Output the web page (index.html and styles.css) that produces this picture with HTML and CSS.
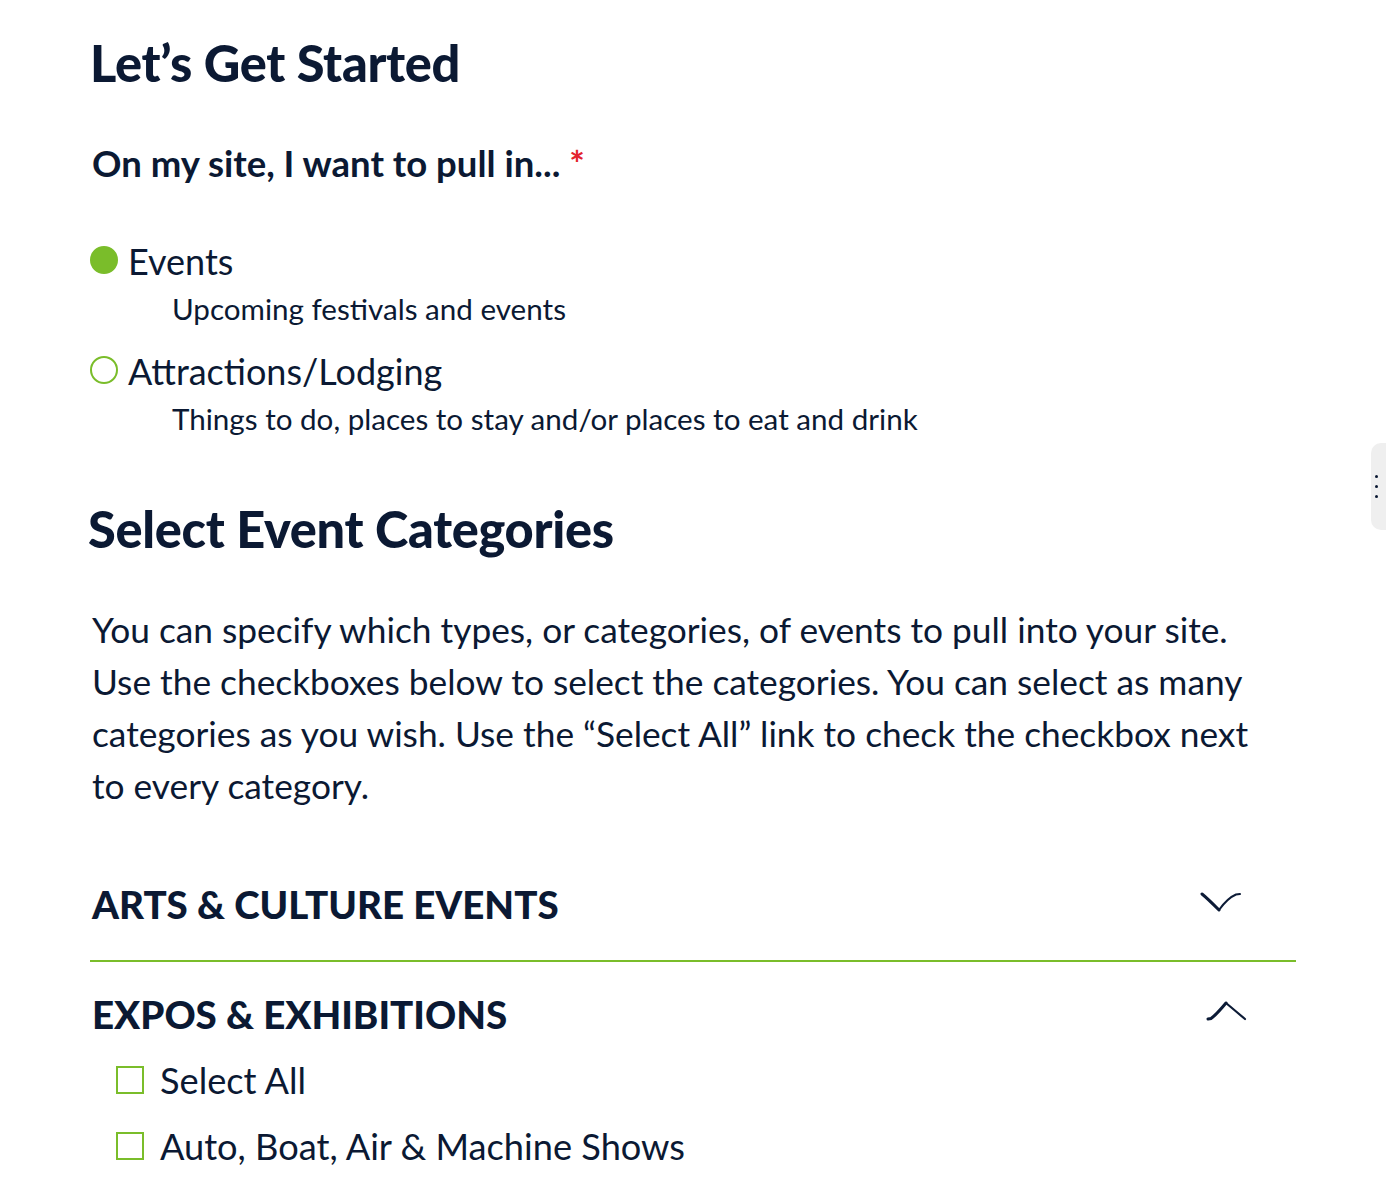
FILE: index.html
```html
<!DOCTYPE html>
<html lang="en">
<head>
<meta charset="utf-8">
<title>Let's Get Started</title>
<link rel="stylesheet" href="styles.css">
</head>
<body>
<main class="page">
  <h1 class="title">Let’s Get Started</h1>

  <fieldset class="question">
    <legend class="question-label">On my site, I want to pull in... <span class="req">*</span></legend>

    <div class="option">
      <div class="option-row">
        <span class="radio radio-on"></span>
        <span class="option-name">Events</span>
      </div>
      <div class="option-desc">Upcoming festivals and events</div>
    </div>

    <div class="option option-second">
      <div class="option-row">
        <span class="radio"></span>
        <span class="option-name">Attractions/Lodging</span>
      </div>
      <div class="option-desc">Things to do, places to stay and/or places to eat and drink</div>
    </div>
  </fieldset>

  <h2 class="title title-second">Select Event Categories</h2>

  <p class="intro">You can specify which types, or categories, of events to pull into your site. Use the checkboxes below to select the categories. You can select as many categories as you wish. Use the “Select All” link to check the checkbox next to every category.</p>

  <section class="acc acc-closed">
    <div class="acc-head">
      <span class="acc-title">ARTS &amp; CULTURE EVENTS</span>
      <svg class="chev chev-down" width="42" height="20" viewBox="0 0 42 20" aria-hidden="true">
        <path d="M2 2 C7 6 13 12 19 18" fill="none" stroke="#0c1b36" stroke-width="3" stroke-linecap="round"/>
        <path d="M19 18 C24 11 30 5 36 2.5 L40 2" fill="none" stroke="#0c1b36" stroke-width="2" stroke-linecap="round"/>
      </svg>
    </div>
  </section>

  <section class="acc acc-open">
    <div class="acc-head">
      <span class="acc-title">EXPOS &amp; EXHIBITIONS</span>
      <svg class="chev chev-up" width="42" height="20" viewBox="0 0 42 20" aria-hidden="true">
        <path d="M2 18 L5 17.5 C10 14 15 8 20 2" fill="none" stroke="#0c1b36" stroke-width="3" stroke-linecap="round"/>
        <path d="M20 2 C26 7 33 13 39 18" fill="none" stroke="#0c1b36" stroke-width="2.2" stroke-linecap="round"/>
      </svg>
    </div>
    <ul class="checks">
      <li class="check"><span class="box"></span><span class="check-label">Select All</span></li>
      <li class="check"><span class="box"></span><span class="check-label">Auto, Boat, Air &amp; Machine Shows</span></li>
    </ul>
  </section>
</main>

<div class="handle" aria-hidden="true">
  <span class="dot"></span><span class="dot"></span><span class="dot"></span>
</div>
</body>
</html>
```

FILE: styles.css
```css
html, body {
  margin: 0;
  padding: 0;
  background: #ffffff;
}

body {
  font-family: "Lato", "Liberation Sans", sans-serif;
  color: #0b1933;
  height: 1180px;
  overflow: hidden;
}

.page {
  width: 1206px;
  margin: 0 auto;
  padding-top: 35px;
}

.title {
  margin: 0;
  font-size: 50.5px;
  line-height: 56px;
  font-weight: 900;
  letter-spacing: -0.3px;
}

.title-second {
  margin-top: 64px;
  margin-left: -2px;
}

.question {
  border: 0;
  margin: 52px 0 0 0;
  padding: 0;
  min-width: 0;
}

.question-label {
  padding: 0;
  display: block;
  float: left;
  width: 100%;
  font-size: 36.5px;
  line-height: 40px;
  font-weight: 700;
  margin-left: 2px;
}

.req {
  color: #e3232c;
  font-weight: 700;
}

.option {
  clear: both;
  padding-top: 58px;
}

.option-second {
  padding-top: 24px;
}

.option-row {
  display: flex;
  align-items: center;
  height: 40px;
}

.radio {
  width: 28px;
  height: 28px;
  border-radius: 50%;
  box-sizing: border-box;
  border: 2px solid #7abd2a;
  margin-right: 10px;
  margin-top: -2px;
}

.radio-on {
  background: #7abd2a;
}

.option-name {
  font-size: 36px;
  line-height: 40px;
  font-weight: 400;
}

.option-desc {
  margin-top: 10px;
  margin-left: 82px;
  font-size: 29.6px;
  line-height: 36px;
  font-weight: 400;
}

.intro {
  margin: 47px 0 0 2px;
  font-size: 35.3px;
  line-height: 52px;
  font-weight: 400;
  width: 1190px;
}

.acc-head {
  display: flex;
  align-items: center;
  justify-content: space-between;
}

.acc-title {
  font-size: 38.5px;
  line-height: 44px;
  font-weight: 900;
  margin-left: 2px;
}

.acc-closed {
  margin-top: 70px;
  padding-bottom: 34px;
  border-bottom: 2px solid #7abd2a;
}

.acc-open {
  padding-top: 30px;
}

.chev {
  display: block;
}

.chev-down {
  margin-right: 54px;
  margin-top: -4px;
}

.chev-up {
  margin-right: 48px;
  margin-top: -6px;
}

.checks {
  list-style: none;
  margin: 24px 0 0 26px;
  padding: 0;
}

.check {
  display: flex;
  align-items: center;
  height: 40px;
}

.check + .check {
  margin-top: 26px;
}

.box {
  width: 28px;
  height: 28px;
  box-sizing: border-box;
  border: 2px solid #7abd2a;
  margin-right: 16px;
}

.check-label {
  font-size: 36.2px;
  line-height: 40px;
  font-weight: 400;
}

.handle {
  position: absolute;
  top: 443px;
  left: 1371px;
  width: 30px;
  height: 87px;
  border-radius: 10px;
  background: #efefef;
  display: flex;
  flex-direction: column;
  align-items: flex-start;
  justify-content: center;
  gap: 7px;
  padding-left: 4px;
  box-sizing: border-box;
}

.dot {
  width: 3px;
  height: 3px;
  border-radius: 50%;
  background: #0b1933;
}
```
